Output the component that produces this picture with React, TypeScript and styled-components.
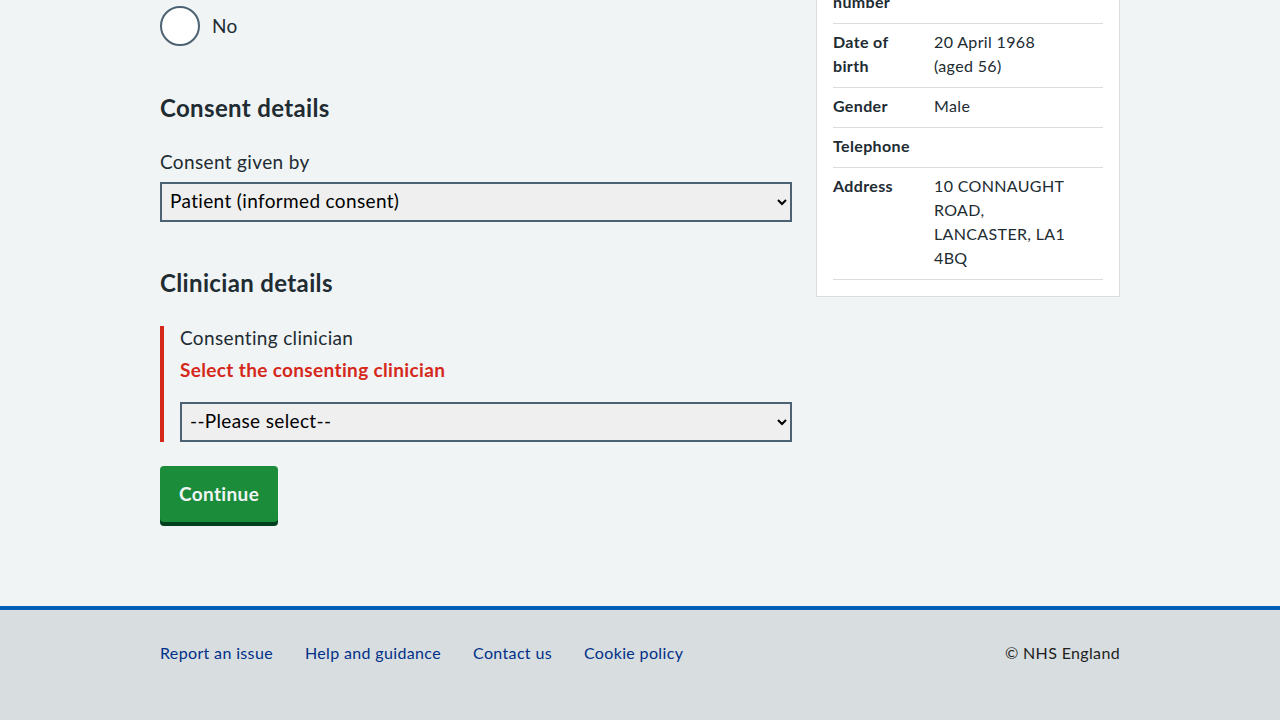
import React from 'react';
import styled, { createGlobalStyle } from 'styled-components';

const GREY_BG = '#f0f4f5';
const TEXT = '#212b32';
const BORDER = '#4c6272';
const RED = '#d5281b';

const GlobalStyle = createGlobalStyle`
  html, body {
    margin: 0;
    padding: 0;
    background: ${GREY_BG};
    font-family: Lato, 'Noto Sans', sans-serif;
    letter-spacing: 0.022em;
    color: ${TEXT};
  }
  * { box-sizing: border-box; }
`;

const patient = [
  { key: 'NHS number', value: '943 476 5919' },
  { key: 'Date of birth', value: '20 April 1968 (aged 56)' },
  { key: 'Gender', value: 'Male' },
  { key: 'Telephone', value: '' },
  { key: 'Address', value: '10 CONNAUGHT ROAD, LANCASTER, LA1 4BQ' },
];

const footerLinks = ['Report an issue', 'Help and guidance', 'Contact us', 'Cookie policy'];

const App = () => (
  <>
    <GlobalStyle />
    <Main>
      <Container>
        <Grid>
          <Column>
            <Radios>
              <RadioItem>
                <RadioCircle />
                <RadioLabel>Yes</RadioLabel>
              </RadioItem>
              <RadioItem>
                <RadioCircle />
                <RadioLabel>No</RadioLabel>
              </RadioItem>
            </Radios>

            <SectionHeading>Consent details</SectionHeading>
            <FormGroup>
              <Label>Consent given by</Label>
              <Select defaultValue="patient">
                <option value="patient">Patient (informed consent)</option>
              </Select>
            </FormGroup>

            <SectionHeading>Clinician details</SectionHeading>
            <FormGroup $error>
              <Label>Consenting clinician</Label>
              <ErrorMessage>Select the consenting clinician</ErrorMessage>
              <Select defaultValue="">
                <option value="">--Please select--</option>
              </Select>
            </FormGroup>

            <Button type="button">Continue</Button>
          </Column>

          <Card>
            <SummaryList>
              {patient.map((row) => (
                <SummaryRow key={row.key}>
                  <SummaryKey>{row.key}</SummaryKey>
                  <SummaryValue>{row.value}</SummaryValue>
                </SummaryRow>
              ))}
            </SummaryList>
          </Card>
        </Grid>
      </Container>
    </Main>
    <Footer>
      <FooterInner>
        <FooterLinks>
          {footerLinks.map((l) => (
            <FooterLink key={l} href="#">
              {l}
            </FooterLink>
          ))}
        </FooterLinks>
        <Copyright>© NHS England</Copyright>
      </FooterInner>
    </Footer>
  </>
);

export default App;

const Main = styled.main`
  padding-bottom: 84px;
`;

const Container = styled.div`
  width: 960px;
  margin: 0 auto;
`;

const Grid = styled.div`
  display: grid;
  grid-template-columns: 632px 304px;
  column-gap: 24px;
  align-items: start;
  margin-top: -57px;
`;

const Column = styled.div`
  padding-top: 15px;
`;

const Radios = styled.div`
  display: flex;
  flex-direction: column;
  gap: 8px;
  margin-bottom: 46px;
`;

const RadioItem = styled.label`
  display: flex;
  align-items: center;
  gap: 12px;
`;

const RadioCircle = styled.span`
  width: 40px;
  height: 40px;
  border: 2px solid ${BORDER};
  border-radius: 50%;
  background: #fff;
`;

const RadioLabel = styled.span`
  font-size: 19px;
  line-height: 28px;
`;

const SectionHeading = styled.h3`
  margin: 0 0 26px;
  font-size: 24px;
  line-height: 32px;
  font-weight: 700;
`;

const FormGroup = styled.div<{ $error?: boolean }>`
  display: flex;
  flex-direction: column;
  margin-bottom: ${(p) => (p.$error ? '24px' : '45px')};
  ${(p) =>
    p.$error &&
    `
    border-left: 4px solid ${RED};
    padding-left: 16px;
    margin-top: 27px;
  `}
`;

const Label = styled.label`
  font-size: 19px;
  line-height: 24px;
  margin-bottom: 8px;
`;

const ErrorMessage = styled.span`
  color: ${RED};
  font-weight: 700;
  font-size: 19px;
  line-height: 24px;
  margin-bottom: 20px;
`;

const Select = styled.select`
  height: 40px;
  width: 100%;
  border: 2px solid ${BORDER};
  border-radius: 0;
  background: #efefef;
  color: #000;
  font-family: inherit;
  letter-spacing: inherit;
  font-size: 19px;
  padding: 0 4px 3px;
`;

const Button = styled.button`
  align-self: flex-start;
  background: #1a8c3a;
  color: #f0f4f5;
  border: 2px solid transparent;
  border-radius: 4px;
  box-shadow: 0 4px 0 #00401e;
  padding: 12px 17px;
  font-family: inherit;
  letter-spacing: inherit;
  font-size: 19px;
  line-height: 28px;
  font-weight: 700;
  cursor: pointer;
`;

const Card = styled.div`
  background: #fff;
  border: 1px solid #d8dde0;
  padding: 16px;
`;

const SummaryList = styled.dl`
  margin: 0;
`;

const SummaryRow = styled.div`
  display: grid;
  grid-template-columns: 101px 135px;
  border-bottom: 1px solid #d8dde0;
  padding: 6px 0 9px;
`;

const SummaryKey = styled.dt`
  font-weight: 700;
  font-size: 16px;
  line-height: 24px;
  padding-right: 16px;
`;

const SummaryValue = styled.dd`
  margin: 0;
  font-size: 16px;
  line-height: 24px;
`;

const Footer = styled.footer`
  border-top: 4px solid #005eb8;
  background: #d8dde0;
  min-height: 130px;
  padding-top: 31px;
`;

const FooterInner = styled.div`
  width: 960px;
  margin: 0 auto;
  display: flex;
  justify-content: space-between;
  align-items: center;
`;

const FooterLinks = styled.div`
  display: flex;
  gap: 32px;
`;

const FooterLink = styled.a`
  color: #003087;
  font-size: 16px;
  line-height: 24px;
  text-decoration: none;
`;

const Copyright = styled.span`
  color: #231f20;
  font-size: 16px;
  line-height: 24px;
`;
